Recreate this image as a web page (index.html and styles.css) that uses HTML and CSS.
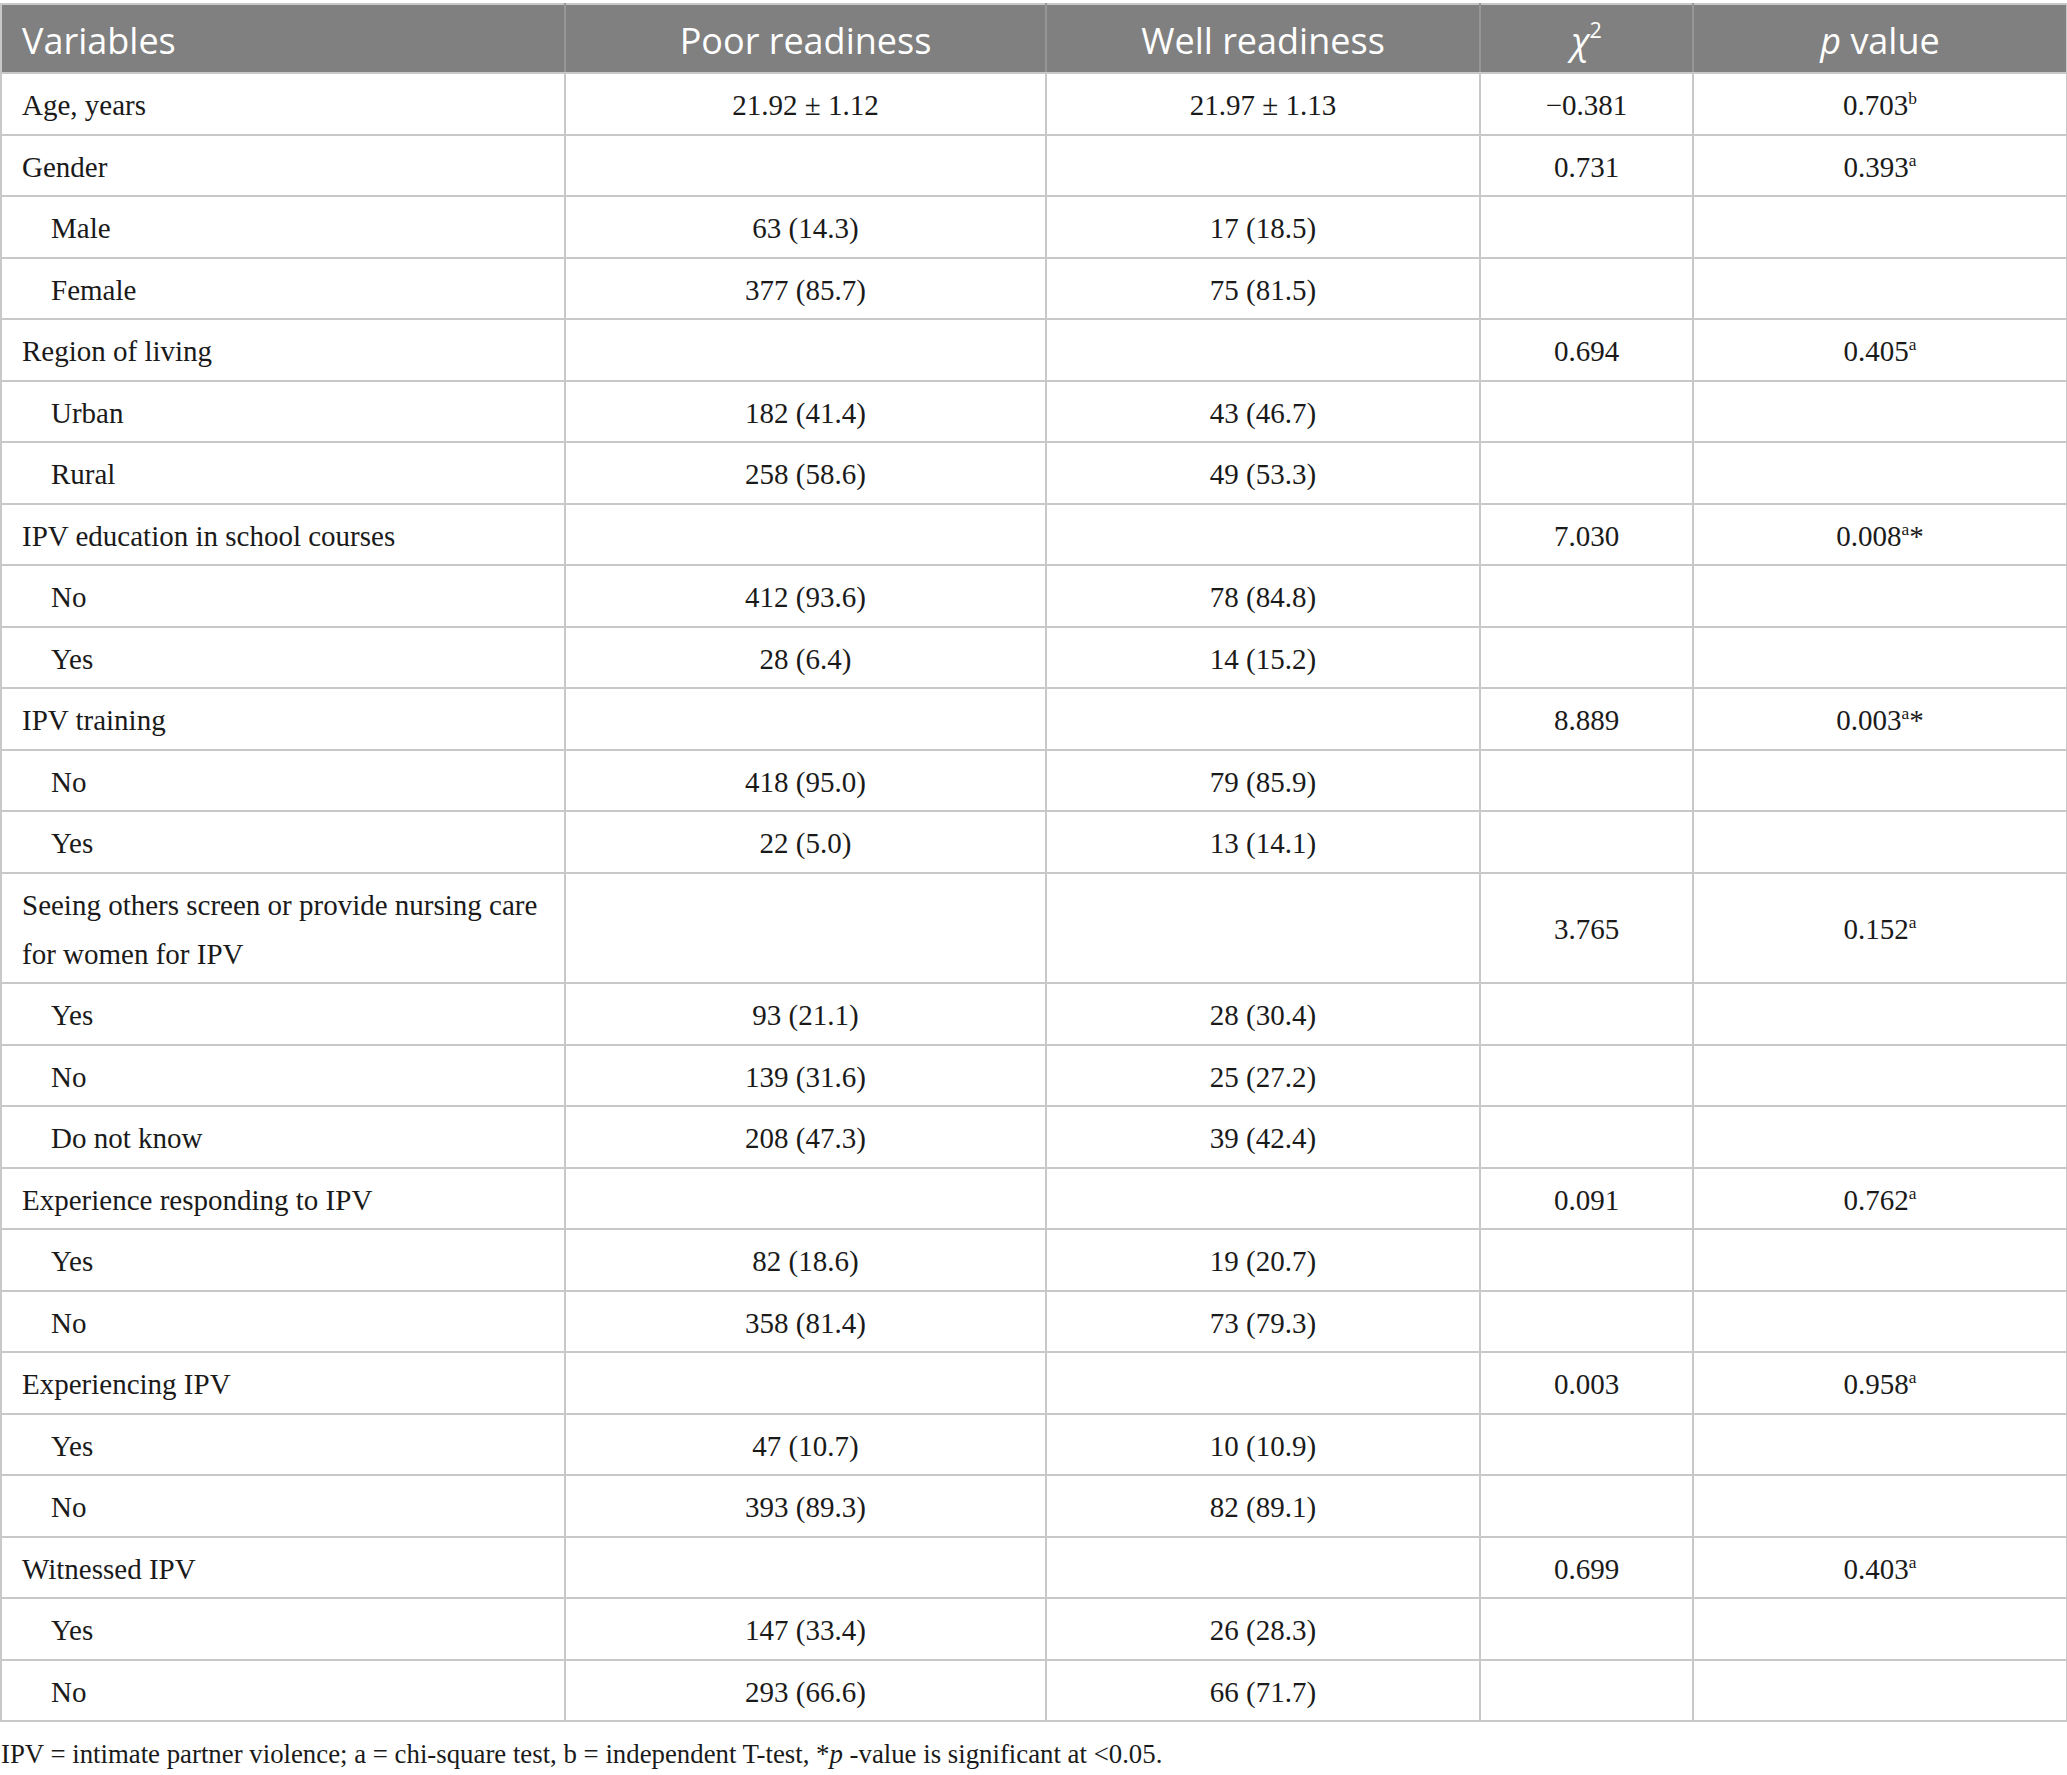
FILE: index.html
```html
<!DOCTYPE html>
<html lang="en">
<head>
<meta charset="utf-8">
<title>Table</title>
<link rel="stylesheet" href="styles.css">
</head>
<body>
<table class="data">
  <colgroup>
    <col class="c1"><col class="c2"><col class="c3"><col class="c4"><col class="c5">
  </colgroup>
  <thead>
    <tr>
      <th class="left">Variables</th>
      <th>Poor readiness</th>
      <th>Well readiness</th>
      <th><span class="chi">χ</span><sup class="hsup">2</sup></th>
      <th><i>p</i> value</th>
    </tr>
  </thead>
  <tbody>
    <tr><td class="var">Age, years</td><td>21.92 ± 1.12</td><td>21.97 ± 1.13</td><td>−0.381</td><td>0.703<sup>b</sup></td></tr>
    <tr><td class="var">Gender</td><td></td><td></td><td>0.731</td><td>0.393<sup>a</sup></td></tr>
    <tr><td class="var sub">Male</td><td>63 (14.3)</td><td>17 (18.5)</td><td></td><td></td></tr>
    <tr><td class="var sub">Female</td><td>377 (85.7)</td><td>75 (81.5)</td><td></td><td></td></tr>
    <tr><td class="var">Region of living</td><td></td><td></td><td>0.694</td><td>0.405<sup>a</sup></td></tr>
    <tr><td class="var sub">Urban</td><td>182 (41.4)</td><td>43 (46.7)</td><td></td><td></td></tr>
    <tr><td class="var sub">Rural</td><td>258 (58.6)</td><td>49 (53.3)</td><td></td><td></td></tr>
    <tr><td class="var">IPV education in school courses</td><td></td><td></td><td>7.030</td><td>0.008<sup>a</sup>*</td></tr>
    <tr><td class="var sub">No</td><td>412 (93.6)</td><td>78 (84.8)</td><td></td><td></td></tr>
    <tr><td class="var sub">Yes</td><td>28 (6.4)</td><td>14 (15.2)</td><td></td><td></td></tr>
    <tr><td class="var">IPV training</td><td></td><td></td><td>8.889</td><td>0.003<sup>a</sup>*</td></tr>
    <tr><td class="var sub">No</td><td>418 (95.0)</td><td>79 (85.9)</td><td></td><td></td></tr>
    <tr><td class="var sub">Yes</td><td>22 (5.0)</td><td>13 (14.1)</td><td></td><td></td></tr>
    <tr><td class="var">Seeing others screen or provide nursing care for women for IPV</td><td></td><td></td><td>3.765</td><td>0.152<sup>a</sup></td></tr>
    <tr><td class="var sub">Yes</td><td>93 (21.1)</td><td>28 (30.4)</td><td></td><td></td></tr>
    <tr><td class="var sub">No</td><td>139 (31.6)</td><td>25 (27.2)</td><td></td><td></td></tr>
    <tr><td class="var sub">Do not know</td><td>208 (47.3)</td><td>39 (42.4)</td><td></td><td></td></tr>
    <tr><td class="var">Experience responding to IPV</td><td></td><td></td><td>0.091</td><td>0.762<sup>a</sup></td></tr>
    <tr><td class="var sub">Yes</td><td>82 (18.6)</td><td>19 (20.7)</td><td></td><td></td></tr>
    <tr><td class="var sub">No</td><td>358 (81.4)</td><td>73 (79.3)</td><td></td><td></td></tr>
    <tr><td class="var">Experiencing IPV</td><td></td><td></td><td>0.003</td><td>0.958<sup>a</sup></td></tr>
    <tr><td class="var sub">Yes</td><td>47 (10.7)</td><td>10 (10.9)</td><td></td><td></td></tr>
    <tr><td class="var sub">No</td><td>393 (89.3)</td><td>82 (89.1)</td><td></td><td></td></tr>
    <tr><td class="var">Witnessed IPV</td><td></td><td></td><td>0.699</td><td>0.403<sup>a</sup></td></tr>
    <tr><td class="var sub">Yes</td><td>147 (33.4)</td><td>26 (28.3)</td><td></td><td></td></tr>
    <tr><td class="var sub">No</td><td>293 (66.6)</td><td>66 (71.7)</td><td></td><td></td></tr>
  </tbody>
</table>
<p class="note">IPV = intimate partner violence; a = chi-square test, b = independent T-test, *<i>p</i> -value is significant at &lt;0.05.</p>
</body>
</html>
```

FILE: styles.css
```css
html, body {
  margin: 0;
  padding: 0;
  background: #ffffff;
}

body {
  font-family: "Liberation Serif", "Times New Roman", serif;
  color: #1a1a1a;
}

.data {
  border-collapse: collapse;
  table-layout: fixed;
  width: 2066px;
  margin-top: 3px;
}

.c1 { width: 564px; }
.c2 { width: 481px; }
.c3 { width: 434px; }
.c4 { width: 213px; }
.c5 { width: 374px; }

.data th {
  background: #808080;
  color: #ffffff;
  font-family: "Open Sans", "Noto Sans", sans-serif;
  font-weight: 400;
  font-size: 36px;
  line-height: 48px;
  padding: 11.5px 20px 7.5px;
  text-align: center;
  border: 2px solid #c8c8c8;
  border-left-color: #969696;
  border-right-color: #969696;
}

.data th:first-child { border-left-color: #c8c8c8; }
.data th:last-child { border-right-color: #c8c8c8; }

.data th.left { text-align: left; }

.chi { font-style: italic; }

.hsup {
  font-size: 0.6em;
  line-height: 0;
  vertical-align: 0.75em;
}

.data td {
  font-size: 29px;
  line-height: 49px;
  padding: 7px 20px 3.5px;
  text-align: center;
  vertical-align: middle;
  border: 2px solid #c8c8c8;
}

.data td.var { text-align: left; }
.data td.sub { padding-left: 49px; }

.data td sup {
  font-size: 0.6em;
  line-height: 0;
  vertical-align: 0.65em;
}

.note {
  margin: 14px 0 0 1px;
  font-size: 26.8px;
  line-height: 36px;
}
```
